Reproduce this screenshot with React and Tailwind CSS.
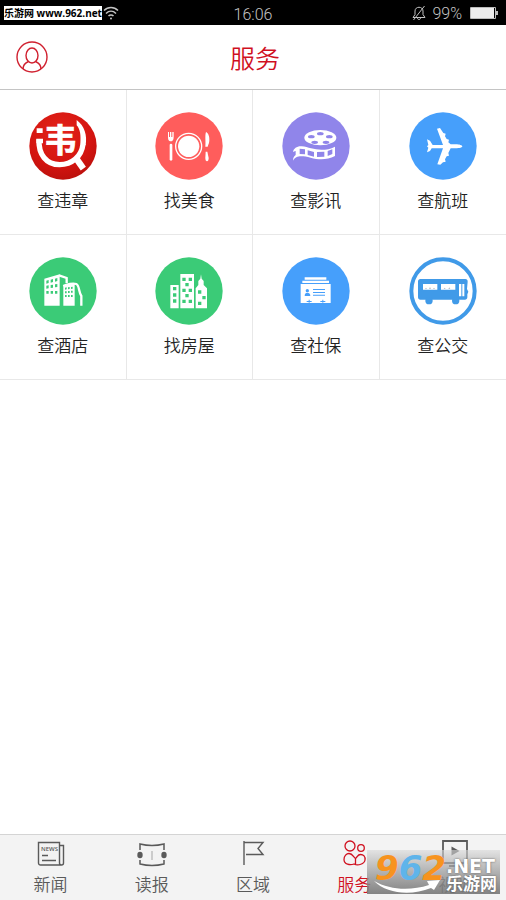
import { useState } from 'react';

const RED = '#d0202f';

const ViolationIcon = () => (
  <svg viewBox="0 0 204 204" className="size-[68px]" aria-hidden="true">
    <defs>
      <radialGradient id="violation" cx="0.45" cy="0.3" r="0.75">
        <stop offset="0" stopColor="#e3241a" />
        <stop offset="0.65" stopColor="#d41410" />
        <stop offset="1" stopColor="#b8100c" />
      </radialGradient>
    </defs>
    <circle cx="102" cy="102" r="101" fill="url(#violation)" />
    <path d="M23 49h18v14H23zM22 80h20v14H22z" fill="#fff" />
    <path d="M30 82C28 128 52 158 92 158c36 0 66-24 70-62" fill="none" stroke="#fff" strokeWidth="16" />
    <path d="M143 24c24 18 32 46 27 76l-16-4c2-26 0-44-11-56z" fill="#fff" />
    <path d="M142 140l21 30" fill="none" stroke="#fff" strokeWidth="19" />
    <text
      x="45"
      y="121"
      fontSize="98"
      fontWeight="700"
      fill="#fff"
      stroke="#fff"
      strokeWidth="2"
      fontFamily="'Noto Sans CJK SC', sans-serif"
    >
      韦
    </text>
  </svg>
);

const FoodIcon = () => (
  <svg viewBox="0 0 204 204" className="size-[68px]" aria-hidden="true">
    <circle cx="102" cy="102" r="101" fill="#ff5d5c" />
    <circle cx="101" cy="103" r="39" fill="none" stroke="#fff" strokeWidth="4" />
    <circle cx="101" cy="103" r="32" fill="#fff" />
    <path d="M39 60h3v15h3V60h4v15h3V60h4v15c0 8-3 11-6 13h-5c-4-2-6-5-6-13z" fill="#fff" />
    <rect x="44" y="95" width="8" height="51" rx="4" fill="#fff" />
    <path d="M153 60c7 3 11 14 10 25 0 8-3 13-5 19h-7c2-14-2-32 2-44z" fill="#fff" />
    <path d="M152 119h5l4 19c0 6-2 10-5 10s-5-4-5-10z" fill="#fff" />
  </svg>
);

const MovieIcon = () => (
  <svg viewBox="0 0 204 204" className="size-[68px]" aria-hidden="true">
    <circle cx="102" cy="102" r="101" fill="#9085ea" />
    <ellipse cx="115" cy="77" rx="48" ry="23" fill="#fff" />
    <g fill="#9085ea">
      <ellipse cx="115" cy="65" rx="10" ry="5" />
      <ellipse cx="88" cy="74" rx="10" ry="5" />
      <ellipse cx="142" cy="74" rx="10" ry="5" />
      <ellipse cx="98" cy="91" rx="10" ry="5" />
      <ellipse cx="132" cy="91" rx="10" ry="5" />
    </g>
    <path
      d="M33 120c2-11 12-18 26-17 10 1 19 4 28 6 25 7 50 6 72-5v28c-24 12-48 12-73 5-20-5-34-6-43-1-5 3-8 6-10 10 0-8 3-13 8-17v-12c-4 1-6 2-8 3z"
      fill="#fff"
    />
    <path
      d="M53 110l16 2v15l-16-1zM77 115l19 5v14l-19-5zM105 120l22-1v15l-22 1zM137 117l14-5v14l-14 6z"
      fill="#9085ea"
    />
  </svg>
);

const PlaneIcon = () => (
  <svg viewBox="0 0 204 204" className="size-[68px]" aria-hidden="true">
    <circle cx="102" cy="102" r="101" fill="#469ffb" />
    <path
      d="M160 103c0 4-9 6-20 6h-15l-7 14 2 8-7 2-5 9 2 7-8 2-8 7-9-1 17-48H68l-5 8-9 4 4-14-4-4 4-4-4-17 9 4 8 13h31L84 50l9-2 10 15 7 2-2 8 5 8 7 2-2 8 7 6h15c11 0 20 3 20 6z"
      fill="#fff"
    />
  </svg>
);

const HotelIcon = () => (
  <svg viewBox="0 0 204 204" className="size-[68px]" aria-hidden="true">
    <circle cx="102" cy="102" r="101" fill="#3bcb77" />
    <path d="M46 65l46-13v94H46zM103 85l34-6v67h-34z" fill="#fff" />
    <path d="M90 55l23 8v15" fill="none" stroke="#fff" strokeWidth="7" />
    <path d="M103 87c10-6 30-9 39-6 9 3 7 25 15 36v29" fill="none" stroke="#fff" strokeWidth="7" />
    <path
      d="M52 71l7-2v9l-7 2zM65 68l7-2v9l-7 2zM78 65l7-2v9l-7 2zM52 86l7-1v9l-7 1zM65 84l7-1v9l-7 1zM78 82l7-1v9l-7 1zM52 102h7v8h-7zM65 102h7v8h-7zM78 102h7v8h-7zM108 92l5-1v6l-5 1zM117 91l5-1v6l-5 1zM126 90l5-1v6l-5 1zM108 103h5v6h-5zM117 102h5v6h-5zM126 101h5v6h-5zM108 114h5v6h-5zM117 114h5v6h-5zM126 114h5v6h-5z"
      fill="#3bcb77"
    />
  </svg>
);

const HouseIcon = () => (
  <svg viewBox="0 0 204 204" className="size-[68px]" aria-hidden="true">
    <circle cx="102" cy="102" r="101" fill="#3bcb77" />
    <path d="M46 84h25v70H46zM76 51h41v103H76zM122 94l8-10V72l6-7 2-13 2 13 6 7v12l10 10v60h-34z" fill="#fff" />
    <path
      d="M54 90h10v10H54zM54 109h10v10H54zM54 127h10v10H54zM82 62h10v10H82zM101 62h10v10h-10zM91 78h10v10H91zM82 95h10v10H82zM101 95h10v10h-10zM91 111h10v10H91zM82 128h10v10H82zM101 128h10v10h-10zM129 100h10v10h-10zM142 117h10v10h-10zM129 134h10v10h-10z"
      fill="#3bcb77"
    />
  </svg>
);

const SocialIcon = () => (
  <svg viewBox="0 0 204 204" className="size-[68px]" aria-hidden="true">
    <circle cx="102" cy="102" r="101" fill="#469ffb" />
    <path d="M68 61h65v7H68zM61 71h80v7H61zM56 81h90v57H56z" fill="#fff" />
    <g fill="#469ffb">
      <circle cx="76" cy="101" r="5" />
      <path d="M68 117c0-8 3-10 8-10s9 2 9 10z" />
      <path d="M93 96h36v3H93zM93 105h36v3H93zM93 113h36v3H93zM74 132h15v3H74zM115 132h15v3h-15zM80 128h3v9h-3zM121 128h3v9h-3z" />
    </g>
  </svg>
);

const BusIcon = () => (
  <svg viewBox="0 0 204 204" className="size-[68px]" aria-hidden="true">
    <circle cx="102" cy="102" r="95" fill="#fff" stroke="#409ae8" strokeWidth="12" />
    <path d="M34 66h135c5 0 7 3 7 8l-2 22 4 8-3 8v9c0 4-3 7-7 7H34c-4 0-7-3-7-7V73c0-4 3-7 7-7z" fill="#409ae8" />
    <circle cx="60" cy="131" r="11" fill="#409ae8" />
    <circle cx="140" cy="131" r="11" fill="#409ae8" />
    <path d="M42 81h43v17H42zM96 81h43v17H96zM150 81h7v37h-7zM160 81h6v37h-6z" fill="#fff" />
    <path d="M48 96l3-4 3 4zM60 96l3-6 3 6zM72 96l3-4 3 4zM104 96l3-4 3 4zM118 96l3-5 3 5z" fill="#b9bdc4" />
  </svg>
);

const NewsIcon = () => (
  <svg viewBox="0 0 28 28" className="size-7" fill="none" stroke="currentColor" strokeWidth="1.400" aria-hidden="true">
    <path d="M1.500 2.500h21V23a2 2 0 0 0 2 2H3.500a2 2 0 0 1-2-2zM22.500 5.500h4V23a2 2 0 0 1-2 2" />
    <path d="M5 15.500h6M5 20.500h14" />
    <text x="4" y="11" fontSize="6" fontWeight="600" fill="currentColor" stroke="none" fontFamily="'Open Sans', sans-serif">
      NEWS
    </text>
  </svg>
);

const ReadIcon = () => (
  <svg viewBox="0 0 30 28" className="h-7 w-[30px]" fill="none" stroke="currentColor" strokeWidth="1.500" aria-hidden="true">
    <path d="M3 10V4c8 2 16 2 24 0v6M3 20v4c8 2 16 2 24 0v-4" />
    <path d="M15 11v9" strokeWidth="1" opacity=".5" />
    <g fill="currentColor" stroke="none">
      <ellipse cx="3" cy="15" rx="2.700" ry="3.300" />
      <ellipse cx="27" cy="15" rx="2.700" ry="3.300" />
    </g>
  </svg>
);

const FlagIcon = () => (
  <svg viewBox="0 0 28 28" className="size-7" fill="none" stroke="currentColor" strokeWidth="1.400" aria-hidden="true">
    <path d="M5 1v24M5 2.500h19l-5 6 5 6H7" />
  </svg>
);

const ServiceIcon = () => (
  <svg viewBox="0 0 28 28" className="size-7" fill="none" stroke="currentColor" strokeWidth="1.300" aria-hidden="true">
    <circle cx="10" cy="6" r="5" />
    <circle cx="21" cy="8" r="3.300" />
    <path d="M14 24c-4 1.500-10 .5-10-4.500 0-3.500 2.500-6 5-6 3.500 0 4.500 3.500 6.500 5 2-1.500 2-4 5-4 3 0 5 2 4.500 5.500-.5 4-7 6-11 4zM15.500 18.500v6" />
  </svg>
);

const VideoIcon = () => (
  <svg viewBox="0 0 28 28" className="size-7" fill="none" stroke="currentColor" strokeWidth="1.800" aria-hidden="true">
    <path d="M2 1h24v22H2zM8 26h12" />
    <path d="M10.500 6.500l8 4.500-8 4.500z" fill="currentColor" stroke="none" />
  </svg>
);

const services = [
  { label: '查违章', Icon: ViolationIcon },
  { label: '找美食', Icon: FoodIcon },
  { label: '查影讯', Icon: MovieIcon },
  { label: '查航班', Icon: PlaneIcon },
  { label: '查酒店', Icon: HotelIcon },
  { label: '找房屋', Icon: HouseIcon },
  { label: '查社保', Icon: SocialIcon },
  { label: '查公交', Icon: BusIcon },
];

const tabs = [
  { label: '新闻', Icon: NewsIcon },
  { label: '读报', Icon: ReadIcon },
  { label: '区域', Icon: FlagIcon },
  { label: '服务', Icon: ServiceIcon },
  { label: '视听', Icon: VideoIcon },
];

function StatusBar() {
  return (
    <div className="relative flex h-[25px] items-center justify-between bg-black pr-2 pl-1 font-['Roboto',sans-serif] text-base leading-6 font-light text-[#c4c4c4]">
      <div className="flex items-center gap-px">
        <span className="bg-white font-['Open_Sans','Noto_Sans_CJK_SC',sans-serif] text-[10px] leading-[14px] font-bold whitespace-nowrap text-black">
          乐游网 www.962.net
        </span>
        <svg viewBox="0 0 16 14" className="h-[14px] w-4" fill="none" stroke="currentColor" strokeWidth="1.500" aria-hidden="true">
          <path d="M1 4.500c4-4 10-4 14 0M3 7.500c3-3 7-3 10 0M5.500 10c1.500-1.500 3.500-1.500 5 0" />
          <circle cx="8" cy="12.500" r="1" fill="currentColor" stroke="none" />
        </svg>
      </div>
      <span className="absolute inset-x-0 pt-1 text-center">16:06</span>
      <div className="flex items-center gap-2">
        <div className="flex items-center gap-1.5">
          <svg viewBox="0 0 14 16" className="h-4 w-[14px]" fill="none" stroke="currentColor" strokeWidth="1" aria-hidden="true">
            <path d="M1 12.500h12l-2-3V6c0-5-8-5-8 0v3.500zM5.500 13c0 2 3 2 3 0M12.500 1L1.500 15" />
          </svg>
          <span className="pt-0.5">99%</span>
        </div>
        <svg viewBox="0 0 28 12" className="h-3 w-7" aria-hidden="true">
          <path d="M.5.5h25v11H.5z" fill="none" stroke="#bbb" />
          <path d="M1 1h23v10H1z" fill="#ececec" />
          <path d="M26 4h2v4h-2z" fill="#bbb" />
        </svg>
      </div>
    </div>
  );
}

function Watermark() {
  return (
    <div className="pointer-events-none absolute right-1.5 bottom-1.5 flex h-11 w-[133px] bg-linear-to-b from-[#d8d8d8]/60 to-[#777777]/90 pl-2 font-['DejaVu_Sans','Noto_Sans_CJK_SC',sans-serif] font-bold">
      <div className="w-[71px] pt-0.5 text-[34px] leading-8 italic">
        <span className="text-[#f7931e]">9</span>
        <span className="text-[#5fb4ea]">6</span>
        <span className="text-[#f7931e]">2</span>
      </div>
      <div className="pt-1.5 text-white text-shadow-[0_0_2px_#555]">
        <div className="text-[19px] leading-5">.NET</div>
        <div className="text-[17px] leading-4 whitespace-nowrap">乐游网</div>
      </div>
      <svg viewBox="0 0 68 14" className="absolute bottom-0 left-1.5 h-[14px] w-[68px]" aria-hidden="true">
        <path d="M1 1c16 9 36 10 55 4l-2-4 13-1-6 10-3-2C38 16 14 14 1 1z" fill="#fff" />
      </svg>
    </div>
  );
}

export default function App() {
  const [active, setActive] = useState('服务');

  return (
    <div className="flex min-h-screen flex-col bg-white font-['Noto_Sans_CJK_SC',sans-serif] font-[350] text-[#222]">
      <StatusBar />

      <header className="grid h-[65px] grid-cols-[64px_1fr_60px] items-center border-b border-[#c4c4c4]">
        <button type="button" aria-label="个人中心" className="pl-4">
          <svg viewBox="0 0 32 32" className="size-8" fill="none" stroke={RED} strokeWidth="1.400" aria-hidden="true">
            <circle cx="16" cy="16" r="15" />
            <ellipse cx="16" cy="14.500" rx="6" ry="7.500" />
            <path d="M7 28c0-4 2-6 5.500-7.500M25 28c0-4-2-6-5.500-7.500" />
          </svg>
        </button>
        <h1 className="text-center text-[25px] leading-8 font-[350] text-[#d0101f]">服务</h1>
      </header>

      {/* Services */}
      <main className="flex-1">
        <div className="grid grid-cols-4">
          {services.map(({ label, Icon }) => (
            <button
              key={label}
              type="button"
              className="flex flex-col items-center gap-2 border-r border-b border-[#e8e8e8] py-[22px] nth-[4n]:border-r-0"
            >
              <Icon />
              <span className="text-[17px] leading-6">{label}</span>
            </button>
          ))}
        </div>
      </main>

      {/* Tab bar */}
      <footer className="relative border-t border-[#d4d4d4] bg-[#f3f3f3]">
        <nav className="grid grid-cols-5">
          {tabs.map(({ label, Icon }) => (
            <button
              key={label}
              type="button"
              onClick={() => setActive(label)}
              className={`flex flex-col items-center gap-1 pt-[5px] pb-1 ${
                active === label ? 'text-[#d0101f]' : 'text-[#5a5a5a]'
              }`}
            >
              <Icon />
              <span className="text-[17px] leading-6">{label}</span>
            </button>
          ))}
        </nav>
        <Watermark />
      </footer>
    </div>
  );
}
